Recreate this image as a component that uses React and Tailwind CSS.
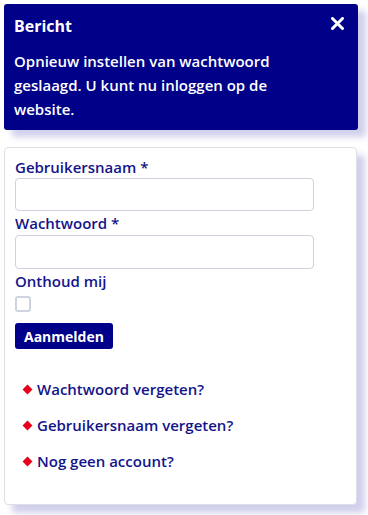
import React from 'react';

const links = ['Wachtwoord vergeten?', 'Gebruikersnaam vergeten?', 'Nog geen account?'];

const App = () => {
  return (
    <div className="min-h-[515px] w-[368px] bg-white p-1 font-['Open_Sans','Noto_Sans',sans-serif]">
      {/* message */}
      <div className="relative w-[354px] rounded-[3px] bg-[#000088] pl-[10px] pr-[30px] pt-[10px] pb-[9px] text-white shadow-[8px_7px_6px_rgba(40,40,170,0.22)]">
        <div className="text-[16px] font-bold leading-[24px]">Bericht</div>
        <button className="absolute right-[14px] top-[13px]">
          <svg width="13" height="13" viewBox="0 0 13 13">
            <path d="M1.5 1.5L11.5 11.5M11.5 1.5L1.5 11.5" stroke="white" strokeWidth="3" strokeLinecap="round" />
          </svg>
        </button>
        <p className="mt-[11px] text-[15px] font-semibold leading-[24px]">
          Opnieuw instellen van wachtwoord geslaagd. U kunt nu inloggen op de website.
        </p>
      </div>

      {/* login form */}
      <div className="mt-[17px] w-[353px] rounded-[4px] border border-[#dedfe6] bg-white pl-[10px] pt-[8px] pb-[32px] text-[#14148a] shadow-[8px_8px_6px_rgba(40,40,170,0.22)]">
        <label className="block text-[15px] font-semibold leading-[22px]">Gebruikersnaam *</label>
        <input className="block h-[33px] w-[299px] rounded-[4px] border border-[#ccd3de] bg-white" />
        <label className="mt-[1px] block text-[15px] font-semibold leading-[23px]">Wachtwoord *</label>
        <input type="password" className="block h-[34px] w-[299px] rounded-[4px] border border-[#ccd3de] bg-white" />
        <label className="block text-[15px] font-semibold leading-[24px]">Onthoud mij</label>
        <div className="mt-[3px] h-[16px] w-[16px] rounded-[3px] border-2 border-[#cdd4df] bg-white" />
        <button className="mt-[11px] flex h-[26px] items-center rounded-[3px] bg-[#000088] px-[9px] text-[14px] font-bold text-white">
          Aanmelden
        </button>
        <ul className="mt-[29px] flex flex-col gap-[14px]">
          {links.map((l) => (
            <li key={l} className="flex h-[22px] items-center pl-[9px]">
              <span className="mr-[6px] h-[7px] w-[7px] rotate-45 bg-[#e6001a]" />
              <a className="text-[15px] font-semibold leading-[22px] text-[#14148a]">{l}</a>
            </li>
          ))}
        </ul>
      </div>
    </div>
  );
};

export default App;
